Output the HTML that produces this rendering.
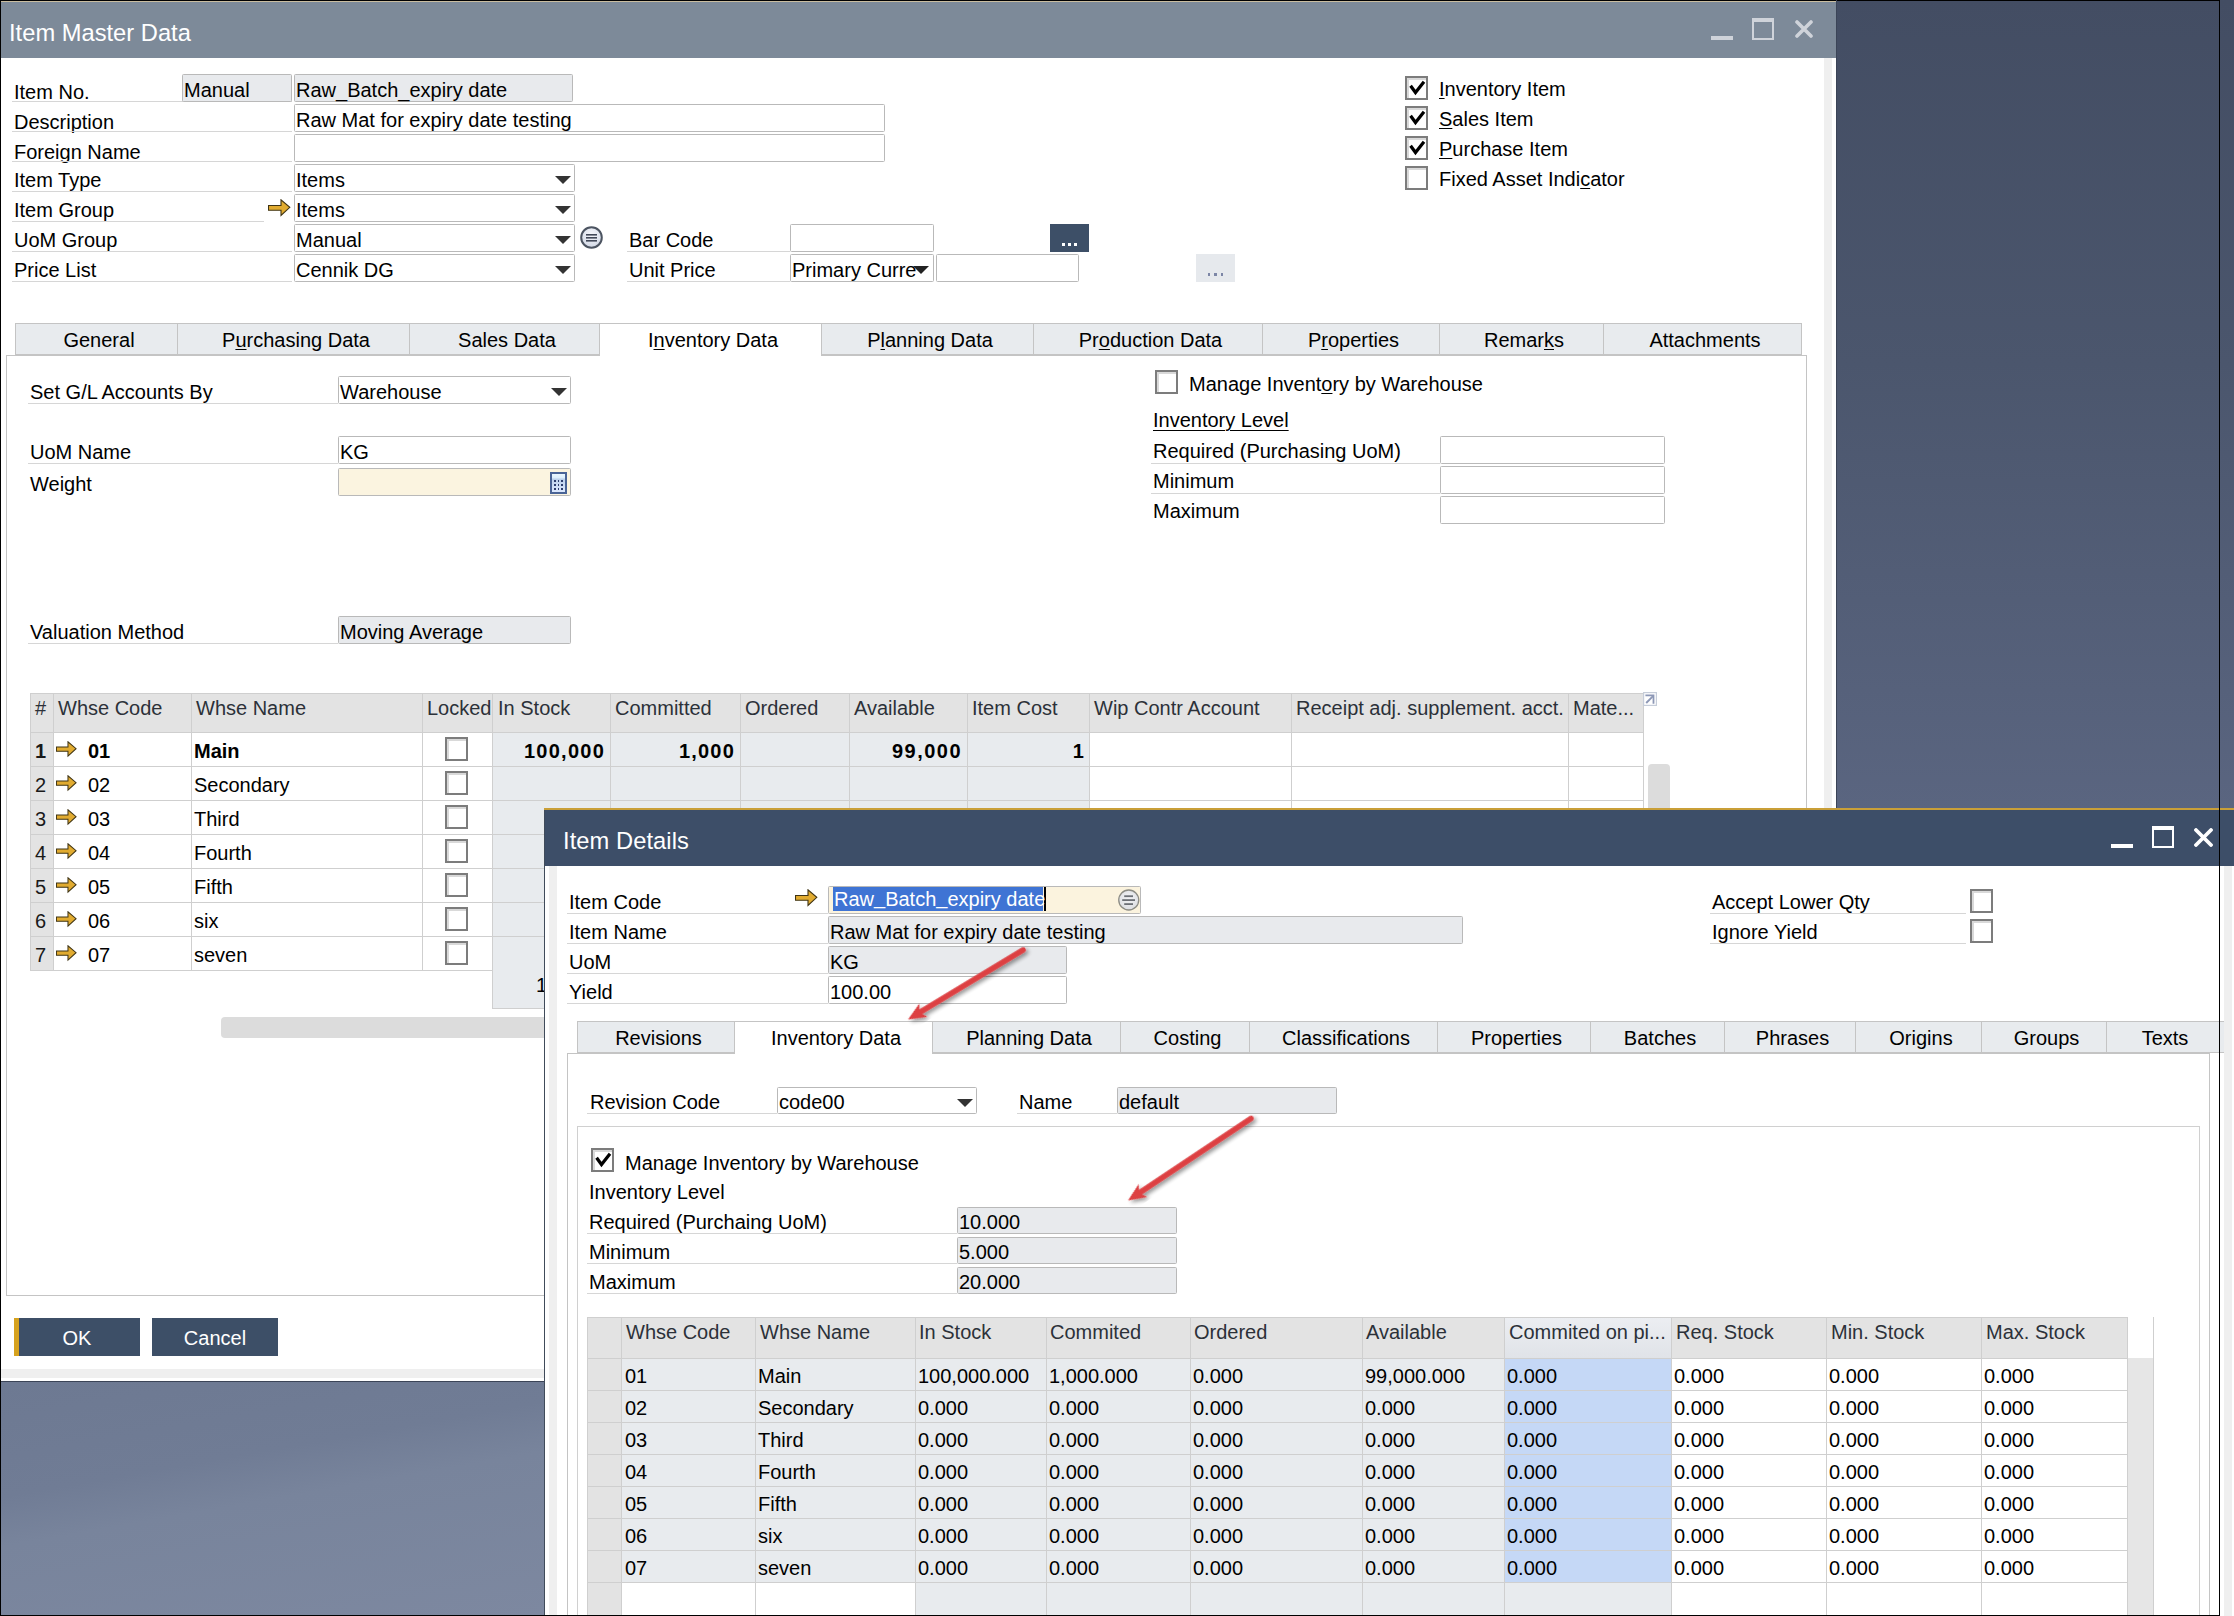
<!DOCTYPE html><html><head><meta charset="utf-8"><style>
html,body{margin:0;padding:0;width:2234px;height:1616px;overflow:hidden;background:#4b566d}
body{position:relative;font-family:"Liberation Sans",sans-serif}
body div,body svg{position:absolute}
.t{white-space:pre}
u{text-decoration:underline;text-underline-offset:2px;text-decoration-thickness:1px}
</style></head><body>
<div style="left:1837px;top:0px;width:397px;height:808px;background:linear-gradient(180deg,#434d63 0%,#4b566d 45%,#5a6580 100%)"></div>
<div style="left:0px;top:1382px;width:545px;height:234px;background:linear-gradient(170deg,#6d7992 0%,#707c95 35%,#78849c 50%,#7d88a0 100%)"></div>
<div style="left:0px;top:0px;width:1837px;height:1382px;background:#fff"></div>
<div style="left:0px;top:0px;width:2220px;height:1px;background:#000"></div>
<div style="left:0px;top:0px;width:1px;height:1381px;background:#000"></div>
<div style="left:1px;top:1px;width:1836px;height:1px;background:#c9bda0"></div>
<div style="left:1px;top:2px;width:1836px;height:56px;background:#7d8a99"></div>
<div class="t" style="left:9.00px;top:18.99px;font-size:23.7px;line-height:28px;color:#fff;letter-spacing:0.015px;">Item Master Data</div>
<div style="left:1711px;top:36px;width:22px;height:4px;background:#cfd3da"></div>
<div style="left:1752px;top:18px;width:22px;height:22px;border:2px solid #cfd3da;border-top-width:4px;box-sizing:border-box"></div>
<svg style="left:1795px;top:20px" width="18" height="18"><path d="M2,2 L16,16 M16,2 L2,16" stroke="#cfd3da" stroke-width="3.6" stroke-linecap="round"/></svg>
<div style="left:1824px;top:58px;width:8px;height:1320px;background:#efefef"></div>
<div style="left:1836px;top:0px;width:1px;height:1382px;background:#3b4457"></div>
<div style="left:1px;top:1369px;width:1835px;height:9px;background:#efefef"></div>
<div style="left:0px;top:1381px;width:1837px;height:1px;background:#3b4457"></div>
<div class="t" style="left:14.00px;top:80.07px;font-size:20px;line-height:24px;color:#000;">Item No.</div>
<div style="left:12px;top:101px;width:280px;height:1px;background:#d6d6d6"></div>
<div class="t" style="left:14.00px;top:110.07px;font-size:20px;line-height:24px;color:#000;">Description</div>
<div style="left:12px;top:131px;width:280px;height:1px;background:#d6d6d6"></div>
<div class="t" style="left:14.00px;top:140.07px;font-size:20px;line-height:24px;color:#000;">Foreign Name</div>
<div style="left:12px;top:161px;width:280px;height:1px;background:#d6d6d6"></div>
<div class="t" style="left:14.00px;top:168.07px;font-size:20px;line-height:24px;color:#000;">Item Type</div>
<div style="left:12px;top:191px;width:280px;height:1px;background:#d6d6d6"></div>
<div class="t" style="left:14.00px;top:198.07px;font-size:20px;line-height:24px;color:#000;">Item Group</div>
<div style="left:12px;top:221px;width:252px;height:1px;background:#d6d6d6"></div>
<div class="t" style="left:14.00px;top:228.07px;font-size:20px;line-height:24px;color:#000;">UoM Group</div>
<div style="left:12px;top:251px;width:280px;height:1px;background:#d6d6d6"></div>
<div class="t" style="left:14.00px;top:258.07px;font-size:20px;line-height:24px;color:#000;">Price List</div>
<div style="left:12px;top:281px;width:280px;height:1px;background:#d6d6d6"></div>
<div style="left:182px;top:74px;width:110px;height:28px;background:#e8eaed;border:1px solid #b9b9b9;border-radius:1.5px;box-sizing:border-box"></div>
<div class="t" style="left:184.00px;top:78.07px;font-size:20px;line-height:24px;color:#000;">Manual</div>
<div style="left:294px;top:74px;width:279px;height:28px;background:#e8eaed;border:1px solid #b9b9b9;border-radius:1.5px;box-sizing:border-box"></div>
<div class="t" style="left:296.00px;top:78.07px;font-size:20px;line-height:24px;color:#000;">Raw_Batch_expiry date</div>
<div style="left:294px;top:104px;width:591px;height:28px;background:#fff;border:1px solid #b9b9b9;border-radius:1.5px;box-sizing:border-box"></div>
<div class="t" style="left:296.00px;top:108.07px;font-size:20px;line-height:24px;color:#000;">Raw Mat for expiry date testing</div>
<div style="left:294px;top:134px;width:591px;height:28px;background:#fff;border:1px solid #b9b9b9;border-radius:1.5px;box-sizing:border-box"></div>
<div style="left:294px;top:164px;width:281px;height:28px;background:#fff;border:1px solid #b9b9b9;border-radius:1.5px;box-sizing:border-box"></div>
<svg style="left:555px;top:176px" width="16" height="8"><polygon points="0,0 16,0 8.0,8" fill="#333"/></svg>
<div class="t" style="left:296.00px;top:168.07px;font-size:20px;line-height:24px;color:#000;">Items</div>
<div style="left:294px;top:194px;width:281px;height:28px;background:#fff;border:1px solid #b9b9b9;border-radius:1.5px;box-sizing:border-box"></div>
<svg style="left:555px;top:206px" width="16" height="8"><polygon points="0,0 16,0 8.0,8" fill="#333"/></svg>
<div class="t" style="left:296.00px;top:198.07px;font-size:20px;line-height:24px;color:#000;">Items</div>
<svg style="left:268px;top:199px" width="23.0" height="18.0" viewBox="0 0 23 18"><path d="M0.5,6.5 H13 V0.8 L21.8,8.3 L13,16.5 V11.2 H0.5 Z" fill="#e1ab30" stroke="#3f3415" stroke-width="1.1" stroke-linejoin="miter"/></svg>
<div style="left:294px;top:224px;width:281px;height:28px;background:#fff;border:1px solid #b9b9b9;border-radius:1.5px;box-sizing:border-box"></div>
<svg style="left:555px;top:236px" width="16" height="8"><polygon points="0,0 16,0 8.0,8" fill="#333"/></svg>
<div class="t" style="left:296.00px;top:228.07px;font-size:20px;line-height:24px;color:#000;">Manual</div>
<div style="left:294px;top:254px;width:281px;height:28px;background:#fff;border:1px solid #b9b9b9;border-radius:1.5px;box-sizing:border-box"></div>
<svg style="left:555px;top:266px" width="16" height="8"><polygon points="0,0 16,0 8.0,8" fill="#333"/></svg>
<div class="t" style="left:296.00px;top:258.07px;font-size:20px;line-height:24px;color:#000;">Cennik DG</div>
<svg style="left:580px;top:226px" width="23" height="23"><defs><radialGradient id="rg580226" cx="50%" cy="35%" r="60%"><stop offset="0" stop-color="#f6f7fc"/><stop offset="1" stop-color="#d4dae6"/></radialGradient></defs><circle cx="11.5" cy="11.5" r="10.3" fill="url(#rg580226)" stroke="#4c5461" stroke-width="2"/><rect x="6" y="8" width="11" height="1.6" fill="#414858"/><rect x="6" y="11" width="11" height="1.6" fill="#414858"/><rect x="6" y="14" width="11" height="1.6" fill="#414858"/></svg>
<div class="t" style="left:629.00px;top:228.07px;font-size:20px;line-height:24px;color:#000;">Bar Code</div>
<div style="left:627px;top:251px;width:163px;height:1px;background:#d6d6d6"></div>
<div class="t" style="left:629.00px;top:258.07px;font-size:20px;line-height:24px;color:#000;">Unit Price</div>
<div style="left:627px;top:281px;width:163px;height:1px;background:#d6d6d6"></div>
<div style="left:790px;top:224px;width:144px;height:28px;background:#fff;border:1px solid #b9b9b9;border-radius:1.5px;box-sizing:border-box"></div>
<div style="left:1050px;top:224px;width:39px;height:28px;background:#3d4f67"></div>
<div style="left:1062px;top:243px;width:2.5px;height:3.3px;background:#fff"></div>
<div style="left:1068px;top:243px;width:2.5px;height:3.3px;background:#fff"></div>
<div style="left:1074px;top:243px;width:2.5px;height:3.3px;background:#fff"></div>
<div style="left:790px;top:254px;width:144px;height:28px;background:#fff;border:1px solid #b9b9b9;border-radius:1.5px;box-sizing:border-box"></div>
<div class="t" style="left:792.00px;top:258.07px;font-size:20px;line-height:24px;color:#000;">Primary Curre</div>
<svg style="left:913px;top:266px" width="16" height="8"><polygon points="0,0 16,0 8.0,8" fill="#222"/></svg>
<div style="left:936px;top:254px;width:143px;height:28px;background:#fff;border:1px solid #b9b9b9;border-radius:1.5px;box-sizing:border-box"></div>
<div style="left:1196px;top:254px;width:39px;height:28px;background:#e6e9ed"></div>
<div style="left:1208px;top:273px;width:2.3px;height:3px;background:#7c86a6"></div>
<div style="left:1214.3px;top:273px;width:2.3px;height:3px;background:#7c86a6"></div>
<div style="left:1220.5px;top:273px;width:2.3px;height:3px;background:#7c86a6"></div>
<div style="left:1405px;top:76px;width:23px;height:24px;border:2px solid #7c7c7c;box-sizing:border-box;background:#fff;box-shadow:inset 2px 2px 0 #d9d9d9"></div>
<svg style="left:1405px;top:76px" width="23" height="23"><polyline points="6.5,11 10.5,16.5 18,7" fill="none" stroke="#000" stroke-width="3.2" stroke-linejoin="miter" stroke-linecap="square"/></svg>
<div class="t" style="left:1439.00px;top:77.07px;font-size:20px;line-height:24px;color:#000;"><u>I</u>nventory Item</div>
<div style="left:1405px;top:106px;width:23px;height:24px;border:2px solid #7c7c7c;box-sizing:border-box;background:#fff;box-shadow:inset 2px 2px 0 #d9d9d9"></div>
<svg style="left:1405px;top:106px" width="23" height="23"><polyline points="6.5,11 10.5,16.5 18,7" fill="none" stroke="#000" stroke-width="3.2" stroke-linejoin="miter" stroke-linecap="square"/></svg>
<div class="t" style="left:1439.00px;top:107.07px;font-size:20px;line-height:24px;color:#000;"><u>S</u>ales Item</div>
<div style="left:1405px;top:136px;width:23px;height:24px;border:2px solid #7c7c7c;box-sizing:border-box;background:#fff;box-shadow:inset 2px 2px 0 #d9d9d9"></div>
<svg style="left:1405px;top:136px" width="23" height="23"><polyline points="6.5,11 10.5,16.5 18,7" fill="none" stroke="#000" stroke-width="3.2" stroke-linejoin="miter" stroke-linecap="square"/></svg>
<div class="t" style="left:1439.00px;top:137.07px;font-size:20px;line-height:24px;color:#000;"><u>P</u>urchase Item</div>
<div style="left:1405px;top:166px;width:23px;height:24px;border:2px solid #7c7c7c;box-sizing:border-box;background:#fff;box-shadow:inset 2px 2px 0 #d9d9d9"></div>
<div class="t" style="left:1439.00px;top:167.07px;font-size:20px;line-height:24px;color:#000;">Fixed Asset Indi<u>c</u>ator</div>
<div style="left:6px;top:355px;width:1801px;height:941px;border:1px solid #c4c4c4;box-sizing:border-box;background:#fff"></div>
<div style="left:15px;top:323px;width:163px;height:32px;background:#e8ebee;border:1px solid #c4c4c4;box-sizing:border-box"></div>
<div class="t" style="left:-101.00px;top:328.07px;font-size:20px;line-height:24px;color:#000;width:400px;text-align:center;">General</div>
<div style="left:177px;top:323px;width:233px;height:32px;background:#e8ebee;border:1px solid #c4c4c4;box-sizing:border-box"></div>
<div class="t" style="left:96.00px;top:328.07px;font-size:20px;line-height:24px;color:#000;width:400px;text-align:center;">P<u>u</u>rchasing Data</div>
<div style="left:409px;top:323px;width:191px;height:32px;background:#e8ebee;border:1px solid #c4c4c4;box-sizing:border-box"></div>
<div class="t" style="left:307.00px;top:328.07px;font-size:20px;line-height:24px;color:#000;width:400px;text-align:center;">Sales Data</div>
<div style="left:599px;top:323px;width:223px;height:33px;background:#fff;border:1px solid #c4c4c4;border-bottom:none;box-sizing:border-box"></div>
<div class="t" style="left:513.00px;top:328.07px;font-size:20px;line-height:24px;color:#000;width:400px;text-align:center;">I<u>n</u>ventory Data</div>
<div style="left:821px;top:323px;width:213px;height:32px;background:#e8ebee;border:1px solid #c4c4c4;box-sizing:border-box"></div>
<div class="t" style="left:730.00px;top:328.07px;font-size:20px;line-height:24px;color:#000;width:400px;text-align:center;">P<u>l</u>anning Data</div>
<div style="left:1033px;top:323px;width:230px;height:32px;background:#e8ebee;border:1px solid #c4c4c4;box-sizing:border-box"></div>
<div class="t" style="left:950.50px;top:328.07px;font-size:20px;line-height:24px;color:#000;width:400px;text-align:center;">Pr<u>o</u>duction Data</div>
<div style="left:1262px;top:323px;width:178px;height:32px;background:#e8ebee;border:1px solid #c4c4c4;box-sizing:border-box"></div>
<div class="t" style="left:1153.50px;top:328.07px;font-size:20px;line-height:24px;color:#000;width:400px;text-align:center;">P<u>r</u>operties</div>
<div style="left:1439px;top:323px;width:165px;height:32px;background:#e8ebee;border:1px solid #c4c4c4;box-sizing:border-box"></div>
<div class="t" style="left:1324.00px;top:328.07px;font-size:20px;line-height:24px;color:#000;width:400px;text-align:center;">Remar<u>k</u>s</div>
<div style="left:1603px;top:323px;width:199px;height:32px;background:#e8ebee;border:1px solid #c4c4c4;box-sizing:border-box"></div>
<div class="t" style="left:1505.00px;top:328.07px;font-size:20px;line-height:24px;color:#000;width:400px;text-align:center;">Attachments</div>
<div class="t" style="left:30.00px;top:380.07px;font-size:20px;line-height:24px;color:#000;">Set G/L Accounts By</div>
<div style="left:28px;top:403px;width:310px;height:1px;background:#d6d6d6"></div>
<div style="left:338px;top:376px;width:233px;height:28px;background:#fff;border:1px solid #b9b9b9;border-radius:1.5px;box-sizing:border-box"></div>
<svg style="left:551px;top:388px" width="16" height="8"><polygon points="0,0 16,0 8.0,8" fill="#333"/></svg>
<div class="t" style="left:340.00px;top:380.07px;font-size:20px;line-height:24px;color:#000;">Warehouse</div>
<div class="t" style="left:30.00px;top:440.07px;font-size:20px;line-height:24px;color:#000;">UoM Name</div>
<div style="left:28px;top:463px;width:310px;height:1px;background:#d6d6d6"></div>
<div style="left:338px;top:436px;width:233px;height:28px;background:#fff;border:1px solid #b9b9b9;border-radius:1.5px;box-sizing:border-box"></div>
<div class="t" style="left:340.00px;top:440.07px;font-size:20px;line-height:24px;color:#000;">KG</div>
<div class="t" style="left:30.00px;top:472.07px;font-size:20px;line-height:24px;color:#000;">Weight</div>
<div style="left:338px;top:468px;width:233px;height:28px;background:#fbf4e0;border:1px solid #b9b9b9;border-radius:1.5px;box-sizing:border-box"></div>
<svg style="left:550px;top:472px" width="17" height="22"><defs><linearGradient id="cg" x1="0" y1="0" x2="0" y2="1"><stop offset="0" stop-color="#eef9ff"/><stop offset="0.25" stop-color="#dceefc"/><stop offset="0.3" stop-color="#bcd0ea"/><stop offset="1" stop-color="#dfeaff"/></defs><rect x="1" y="1" width="15" height="20" fill="url(#cg)" stroke="#4a6496" stroke-width="2"/><rect x="4" y="8" width="2" height="2" fill="#2e3f6e"/><rect x="4" y="12" width="2" height="2" fill="#2e3f6e"/><rect x="4" y="16" width="2" height="2" fill="#2e3f6e"/><rect x="8" y="8" width="1" height="2" fill="#2e3f6e"/><rect x="8" y="12" width="1" height="2" fill="#2e3f6e"/><rect x="8" y="16" width="1" height="2" fill="#2e3f6e"/><rect x="11" y="8" width="2" height="2" fill="#2e3f6e"/><rect x="11" y="12" width="2" height="2" fill="#2e3f6e"/><rect x="11" y="16" width="2" height="2" fill="#2e3f6e"/></svg>
<div class="t" style="left:30.00px;top:620.07px;font-size:20px;line-height:24px;color:#000;">Valuation Method</div>
<div style="left:28px;top:643px;width:310px;height:1px;background:#d6d6d6"></div>
<div style="left:338px;top:616px;width:233px;height:28px;background:#e8eaed;border:1px solid #b9b9b9;border-radius:1.5px;box-sizing:border-box"></div>
<div class="t" style="left:340.00px;top:620.07px;font-size:20px;line-height:24px;color:#000;">Moving Average</div>
<div style="left:1155px;top:370px;width:23px;height:24px;border:2px solid #7c7c7c;box-sizing:border-box;background:#fff;box-shadow:inset 2px 2px 0 #d9d9d9"></div>
<div class="t" style="left:1189.00px;top:372.07px;font-size:20px;line-height:24px;color:#000;">Manage Invent<u>o</u>ry by Warehouse</div>
<div class="t" style="left:1153.00px;top:408.07px;font-size:20px;line-height:24px;color:#000;text-decoration:underline;text-underline-offset:3px;text-decoration-thickness:1px;">Inventory Level</div>
<div class="t" style="left:1153.00px;top:439.07px;font-size:20px;line-height:24px;color:#000;">Required (Purchasing UoM)</div>
<div style="left:1151px;top:463px;width:289px;height:1px;background:#d6d6d6"></div>
<div class="t" style="left:1153.00px;top:469.07px;font-size:20px;line-height:24px;color:#000;">Minimum</div>
<div style="left:1151px;top:493px;width:289px;height:1px;background:#d6d6d6"></div>
<div class="t" style="left:1153.00px;top:499.07px;font-size:20px;line-height:24px;color:#000;">Maximum</div>
<div style="left:1440px;top:436px;width:225px;height:28px;background:#fff;border:1px solid #b9b9b9;border-radius:1.5px;box-sizing:border-box"></div>
<div style="left:1440px;top:466px;width:225px;height:28px;background:#fff;border:1px solid #b9b9b9;border-radius:1.5px;box-sizing:border-box"></div>
<div style="left:1440px;top:496px;width:225px;height:28px;background:#fff;border:1px solid #b9b9b9;border-radius:1.5px;box-sizing:border-box"></div>
<div style="left:30px;top:693px;width:1613px;height:40px;background:#e3e3e3"></div>
<div style="left:30px;top:732px;width:23px;height:34px;background:#e3e3e3"></div>
<div style="left:53px;top:732px;width:439px;height:34px;background:#fff"></div>
<div style="left:492px;top:732px;width:597px;height:34px;background:#e8ebee"></div>
<div style="left:1089px;top:732px;width:554px;height:34px;background:#fff"></div>
<div style="left:30px;top:766px;width:23px;height:34px;background:#e3e3e3"></div>
<div style="left:53px;top:766px;width:439px;height:34px;background:#fff"></div>
<div style="left:492px;top:766px;width:597px;height:34px;background:#e8ebee"></div>
<div style="left:1089px;top:766px;width:554px;height:34px;background:#fff"></div>
<div style="left:30px;top:800px;width:23px;height:34px;background:#e3e3e3"></div>
<div style="left:53px;top:800px;width:439px;height:34px;background:#fff"></div>
<div style="left:492px;top:800px;width:597px;height:34px;background:#e8ebee"></div>
<div style="left:1089px;top:800px;width:554px;height:34px;background:#fff"></div>
<div style="left:30px;top:834px;width:23px;height:34px;background:#e3e3e3"></div>
<div style="left:53px;top:834px;width:439px;height:34px;background:#fff"></div>
<div style="left:492px;top:834px;width:597px;height:34px;background:#e8ebee"></div>
<div style="left:1089px;top:834px;width:554px;height:34px;background:#fff"></div>
<div style="left:30px;top:868px;width:23px;height:34px;background:#e3e3e3"></div>
<div style="left:53px;top:868px;width:439px;height:34px;background:#fff"></div>
<div style="left:492px;top:868px;width:597px;height:34px;background:#e8ebee"></div>
<div style="left:1089px;top:868px;width:554px;height:34px;background:#fff"></div>
<div style="left:30px;top:902px;width:23px;height:34px;background:#e3e3e3"></div>
<div style="left:53px;top:902px;width:439px;height:34px;background:#fff"></div>
<div style="left:492px;top:902px;width:597px;height:34px;background:#e8ebee"></div>
<div style="left:1089px;top:902px;width:554px;height:34px;background:#fff"></div>
<div style="left:30px;top:936px;width:23px;height:34px;background:#e3e3e3"></div>
<div style="left:53px;top:936px;width:439px;height:34px;background:#fff"></div>
<div style="left:492px;top:936px;width:597px;height:34px;background:#e8ebee"></div>
<div style="left:1089px;top:936px;width:554px;height:34px;background:#fff"></div>
<div style="left:30px;top:693px;width:1613px;height:1px;background:#cfcfcf"></div>
<div style="left:30px;top:732px;width:1613px;height:1px;background:#cfcfcf"></div>
<div style="left:30px;top:766px;width:1613px;height:1px;background:#cfcfcf"></div>
<div style="left:30px;top:800px;width:1613px;height:1px;background:#cfcfcf"></div>
<div style="left:30px;top:834px;width:1613px;height:1px;background:#cfcfcf"></div>
<div style="left:30px;top:868px;width:1613px;height:1px;background:#cfcfcf"></div>
<div style="left:30px;top:902px;width:1613px;height:1px;background:#cfcfcf"></div>
<div style="left:30px;top:936px;width:1613px;height:1px;background:#cfcfcf"></div>
<div style="left:30px;top:970px;width:1613px;height:1px;background:#cfcfcf"></div>
<div style="left:30px;top:693px;width:1px;height:277px;background:#cfcfcf"></div>
<div style="left:53px;top:693px;width:1px;height:277px;background:#cfcfcf"></div>
<div style="left:191px;top:693px;width:1px;height:277px;background:#cfcfcf"></div>
<div style="left:422px;top:693px;width:1px;height:277px;background:#cfcfcf"></div>
<div style="left:492px;top:693px;width:1px;height:277px;background:#cfcfcf"></div>
<div style="left:610px;top:693px;width:1px;height:277px;background:#cfcfcf"></div>
<div style="left:740px;top:693px;width:1px;height:277px;background:#cfcfcf"></div>
<div style="left:849px;top:693px;width:1px;height:277px;background:#cfcfcf"></div>
<div style="left:967px;top:693px;width:1px;height:277px;background:#cfcfcf"></div>
<div style="left:1089px;top:693px;width:1px;height:277px;background:#cfcfcf"></div>
<div style="left:1291px;top:693px;width:1px;height:277px;background:#cfcfcf"></div>
<div style="left:1568px;top:693px;width:1px;height:277px;background:#cfcfcf"></div>
<div style="left:1643px;top:693px;width:1px;height:277px;background:#cfcfcf"></div>
<div class="t" style="left:35.00px;top:696.07px;font-size:20px;line-height:24px;color:#2c3139;">#</div>
<div class="t" style="left:58.00px;top:696.07px;font-size:20px;line-height:24px;color:#2c3139;">Whse Code</div>
<div class="t" style="left:196.00px;top:696.07px;font-size:20px;line-height:24px;color:#2c3139;">Whse Name</div>
<div class="t" style="left:427.00px;top:696.07px;font-size:20px;line-height:24px;color:#2c3139;">Locked</div>
<div class="t" style="left:498.00px;top:696.07px;font-size:20px;line-height:24px;color:#2c3139;">In Stock</div>
<div class="t" style="left:615.00px;top:696.07px;font-size:20px;line-height:24px;color:#2c3139;">Committed</div>
<div class="t" style="left:745.00px;top:696.07px;font-size:20px;line-height:24px;color:#2c3139;">Ordered</div>
<div class="t" style="left:854.00px;top:696.07px;font-size:20px;line-height:24px;color:#2c3139;">Available</div>
<div class="t" style="left:972.00px;top:696.07px;font-size:20px;line-height:24px;color:#2c3139;">Item Cost</div>
<div class="t" style="left:1094.00px;top:696.07px;font-size:20px;line-height:24px;color:#2c3139;">Wip Contr Account</div>
<div class="t" style="left:1296.00px;top:696.07px;font-size:20px;line-height:24px;color:#2c3139;">Receipt adj. supplement. acct.</div>
<div class="t" style="left:1573.00px;top:696.07px;font-size:20px;line-height:24px;color:#2c3139;">Mate...</div>
<svg style="left:1643px;top:692px" width="14" height="14"><rect x="0.6" y="0.6" width="12.8" height="12.8" fill="#fff" stroke="#c6cdd9" stroke-width="1.2"/><path d="M3.3,3.3 H10.5 V10.8" stroke="#8d98b6" stroke-width="1.8" fill="none" stroke-linecap="square"/><path d="M3.2,11 L10,4.2" stroke="#8d98b6" stroke-width="1.9" fill="none"/></svg>
<div class="t" style="left:35.00px;top:738.57px;font-size:20px;line-height:24px;color:#1a1a1a;font-weight:bold;">1</div>
<svg style="left:56px;top:741px" width="21.2" height="16.6" viewBox="0 0 23 18"><path d="M0.5,6.5 H13 V0.8 L21.8,8.3 L13,16.5 V11.2 H0.5 Z" fill="#e1ab30" stroke="#3f3415" stroke-width="1.1" stroke-linejoin="miter"/></svg>
<div class="t" style="left:88.00px;top:738.57px;font-size:20px;line-height:24px;color:#000;font-weight:bold;">01</div>
<div class="t" style="left:194.00px;top:738.57px;font-size:20px;line-height:24px;color:#000;font-weight:bold;">Main</div>
<div style="left:445px;top:737px;width:23px;height:24px;border:2px solid #7c7c7c;box-sizing:border-box;background:#fff;box-shadow:inset 2px 2px 0 #d9d9d9"></div>
<div class="t" style="left:35.00px;top:772.57px;font-size:20px;line-height:24px;color:#1a1a1a;">2</div>
<svg style="left:56px;top:775px" width="21.2" height="16.6" viewBox="0 0 23 18"><path d="M0.5,6.5 H13 V0.8 L21.8,8.3 L13,16.5 V11.2 H0.5 Z" fill="#e1ab30" stroke="#3f3415" stroke-width="1.1" stroke-linejoin="miter"/></svg>
<div class="t" style="left:88.00px;top:772.57px;font-size:20px;line-height:24px;color:#000;">02</div>
<div class="t" style="left:194.00px;top:772.57px;font-size:20px;line-height:24px;color:#000;">Secondary</div>
<div style="left:445px;top:771px;width:23px;height:24px;border:2px solid #7c7c7c;box-sizing:border-box;background:#fff;box-shadow:inset 2px 2px 0 #d9d9d9"></div>
<div class="t" style="left:35.00px;top:806.57px;font-size:20px;line-height:24px;color:#1a1a1a;">3</div>
<svg style="left:56px;top:809px" width="21.2" height="16.6" viewBox="0 0 23 18"><path d="M0.5,6.5 H13 V0.8 L21.8,8.3 L13,16.5 V11.2 H0.5 Z" fill="#e1ab30" stroke="#3f3415" stroke-width="1.1" stroke-linejoin="miter"/></svg>
<div class="t" style="left:88.00px;top:806.57px;font-size:20px;line-height:24px;color:#000;">03</div>
<div class="t" style="left:194.00px;top:806.57px;font-size:20px;line-height:24px;color:#000;">Third</div>
<div style="left:445px;top:805px;width:23px;height:24px;border:2px solid #7c7c7c;box-sizing:border-box;background:#fff;box-shadow:inset 2px 2px 0 #d9d9d9"></div>
<div class="t" style="left:35.00px;top:840.57px;font-size:20px;line-height:24px;color:#1a1a1a;">4</div>
<svg style="left:56px;top:843px" width="21.2" height="16.6" viewBox="0 0 23 18"><path d="M0.5,6.5 H13 V0.8 L21.8,8.3 L13,16.5 V11.2 H0.5 Z" fill="#e1ab30" stroke="#3f3415" stroke-width="1.1" stroke-linejoin="miter"/></svg>
<div class="t" style="left:88.00px;top:840.57px;font-size:20px;line-height:24px;color:#000;">04</div>
<div class="t" style="left:194.00px;top:840.57px;font-size:20px;line-height:24px;color:#000;">Fourth</div>
<div style="left:445px;top:839px;width:23px;height:24px;border:2px solid #7c7c7c;box-sizing:border-box;background:#fff;box-shadow:inset 2px 2px 0 #d9d9d9"></div>
<div class="t" style="left:35.00px;top:874.57px;font-size:20px;line-height:24px;color:#1a1a1a;">5</div>
<svg style="left:56px;top:877px" width="21.2" height="16.6" viewBox="0 0 23 18"><path d="M0.5,6.5 H13 V0.8 L21.8,8.3 L13,16.5 V11.2 H0.5 Z" fill="#e1ab30" stroke="#3f3415" stroke-width="1.1" stroke-linejoin="miter"/></svg>
<div class="t" style="left:88.00px;top:874.57px;font-size:20px;line-height:24px;color:#000;">05</div>
<div class="t" style="left:194.00px;top:874.57px;font-size:20px;line-height:24px;color:#000;">Fifth</div>
<div style="left:445px;top:873px;width:23px;height:24px;border:2px solid #7c7c7c;box-sizing:border-box;background:#fff;box-shadow:inset 2px 2px 0 #d9d9d9"></div>
<div class="t" style="left:35.00px;top:908.57px;font-size:20px;line-height:24px;color:#1a1a1a;">6</div>
<svg style="left:56px;top:911px" width="21.2" height="16.6" viewBox="0 0 23 18"><path d="M0.5,6.5 H13 V0.8 L21.8,8.3 L13,16.5 V11.2 H0.5 Z" fill="#e1ab30" stroke="#3f3415" stroke-width="1.1" stroke-linejoin="miter"/></svg>
<div class="t" style="left:88.00px;top:908.57px;font-size:20px;line-height:24px;color:#000;">06</div>
<div class="t" style="left:194.00px;top:908.57px;font-size:20px;line-height:24px;color:#000;">six</div>
<div style="left:445px;top:907px;width:23px;height:24px;border:2px solid #7c7c7c;box-sizing:border-box;background:#fff;box-shadow:inset 2px 2px 0 #d9d9d9"></div>
<div class="t" style="left:35.00px;top:942.57px;font-size:20px;line-height:24px;color:#1a1a1a;">7</div>
<svg style="left:56px;top:945px" width="21.2" height="16.6" viewBox="0 0 23 18"><path d="M0.5,6.5 H13 V0.8 L21.8,8.3 L13,16.5 V11.2 H0.5 Z" fill="#e1ab30" stroke="#3f3415" stroke-width="1.1" stroke-linejoin="miter"/></svg>
<div class="t" style="left:88.00px;top:942.57px;font-size:20px;line-height:24px;color:#000;">07</div>
<div class="t" style="left:194.00px;top:942.57px;font-size:20px;line-height:24px;color:#000;">seven</div>
<div style="left:445px;top:941px;width:23px;height:24px;border:2px solid #7c7c7c;box-sizing:border-box;background:#fff;box-shadow:inset 2px 2px 0 #d9d9d9"></div>
<div class="t" style="left:520.00px;top:738.57px;font-size:20px;line-height:24px;color:#000;font-weight:bold;letter-spacing:1.243px;width:85.00px;text-align:right;">100,000</div>
<div class="t" style="left:675.00px;top:738.57px;font-size:20px;line-height:24px;color:#000;font-weight:bold;letter-spacing:1.190px;width:60.00px;text-align:right;">1,000</div>
<div class="t" style="left:888.00px;top:738.57px;font-size:20px;line-height:24px;color:#000;font-weight:bold;letter-spacing:1.471px;width:74.00px;text-align:right;">99,000</div>
<div class="t" style="left:1068.88px;top:738.57px;font-size:20px;line-height:24px;color:#000;font-weight:bold;width:15.12px;text-align:right;">1</div>
<div style="left:492px;top:970px;width:60px;height:39px;background:#e8ebee;border-left:1px solid #cfcfcf;border-bottom:1px solid #cfcfcf;box-sizing:border-box"></div>
<div class="t" style="left:536.00px;top:972.57px;font-size:20px;line-height:24px;color:#000;">1</div>
<div style="left:221px;top:1017px;width:400px;height:21px;background:#dcdcdc;border-radius:4px"></div>
<div style="left:1648px;top:764px;width:22px;height:60px;background:#dcdcdc;border-radius:4px"></div>
<div style="left:14px;top:1318px;width:126px;height:38px;background:#3d4f67;border-left:5px solid #d6a21e;box-sizing:border-box"></div>
<div class="t" style="left:-123.00px;top:1325.57px;font-size:20px;line-height:24px;color:#fff;width:400px;text-align:center;">OK</div>
<div style="left:152px;top:1318px;width:126px;height:38px;background:#3d4f67"></div>
<div class="t" style="left:15.00px;top:1325.57px;font-size:20px;line-height:24px;color:#fff;width:400px;text-align:center;">Cancel</div>
<div style="left:544px;top:808px;width:1690px;height:808px;background:#fff"></div>
<div style="left:544px;top:808px;width:1690px;height:2px;background:#c99f38"></div>
<div style="left:544px;top:810px;width:1690px;height:56px;background:#3d4e68"></div>
<div style="left:544px;top:810px;width:1px;height:806px;background:#404b5a"></div>
<div style="left:549px;top:866px;width:8px;height:750px;background:#efefef"></div>
<div class="t" style="left:563.00px;top:826.79px;font-size:23.7px;line-height:28px;color:#fff;letter-spacing:0.073px;">Item Details</div>
<div style="left:2111px;top:844px;width:22px;height:4px;background:#fff"></div>
<div style="left:2152px;top:826px;width:22px;height:22px;border:2px solid #fff;border-top-width:4px;box-sizing:border-box"></div>
<svg style="left:2194px;top:828px" width="19" height="19"><path d="M2,2 L17,17 M17,2 L2,17" stroke="#fff" stroke-width="3.8" stroke-linecap="round"/></svg>
<div class="t" style="left:569.00px;top:890.07px;font-size:20px;line-height:24px;color:#000;">Item Code</div>
<div style="left:567px;top:913px;width:261px;height:1px;background:#d6d6d6"></div>
<div class="t" style="left:569.00px;top:920.07px;font-size:20px;line-height:24px;color:#000;">Item Name</div>
<div style="left:567px;top:943px;width:261px;height:1px;background:#d6d6d6"></div>
<div class="t" style="left:569.00px;top:950.07px;font-size:20px;line-height:24px;color:#000;">UoM</div>
<div style="left:567px;top:973px;width:261px;height:1px;background:#d6d6d6"></div>
<div class="t" style="left:569.00px;top:980.07px;font-size:20px;line-height:24px;color:#000;">Yield</div>
<div style="left:567px;top:1003px;width:261px;height:1px;background:#d6d6d6"></div>
<div style="left:828px;top:886px;width:313px;height:28px;background:#fbf3de;border:1px solid #b9b9b9;border-radius:1.5px;box-sizing:border-box"></div>
<div style="left:833px;top:887px;width:210px;height:24px;background:#3f74d4"></div>
<div style="left:1044px;top:887px;width:2px;height:24px;background:#000"></div>
<div class="t" style="left:834px;top:887.07px;font-size:20px;line-height:24px;color:#fff">Raw<span style="position:relative;top:-2.5px">_</span>Batch<span style="position:relative;top:-2.5px">_</span>expiry date</div>
<svg style="left:1118px;top:889px" width="22" height="22"><defs><radialGradient id="rh1118" cx="50%" cy="40%" r="60%"><stop offset="0" stop-color="#f2f3f5"/><stop offset="1" stop-color="#dcdee2"/></radialGradient></defs><circle cx="10.75" cy="11" r="10" fill="url(#rh1118)" stroke="#8c8c84" stroke-width="1.3"/><rect x="6.2" y="6.3" width="8.8" height="1.8" fill="#6c7076"/><rect x="4.2" y="10.2" width="12.8" height="1.8" fill="#6c7076"/><rect x="6.2" y="14.2" width="8.8" height="1.8" fill="#6c7076"/></svg>
<svg style="left:795px;top:889px" width="23.0" height="18.0" viewBox="0 0 23 18"><path d="M0.5,6.5 H13 V0.8 L21.8,8.3 L13,16.5 V11.2 H0.5 Z" fill="#e1ab30" stroke="#3f3415" stroke-width="1.1" stroke-linejoin="miter"/></svg>
<div style="left:828px;top:916px;width:635px;height:28px;background:#e8eaed;border:1px solid #b9b9b9;border-radius:1.5px;box-sizing:border-box"></div>
<div class="t" style="left:830.00px;top:920.07px;font-size:20px;line-height:24px;color:#000;">Raw Mat for expiry date testing</div>
<div style="left:828px;top:946px;width:239px;height:28px;background:#e8eaed;border:1px solid #b9b9b9;border-radius:1.5px;box-sizing:border-box"></div>
<div class="t" style="left:830.00px;top:950.07px;font-size:20px;line-height:24px;color:#000;">KG</div>
<div style="left:828px;top:976px;width:239px;height:28px;background:#fff;border:1px solid #b9b9b9;border-radius:1.5px;box-sizing:border-box"></div>
<div class="t" style="left:830.00px;top:980.07px;font-size:20px;line-height:24px;color:#000;">100.00</div>
<div class="t" style="left:1712.00px;top:890.07px;font-size:20px;line-height:24px;color:#000;">Accept Lower Qty</div>
<div style="left:1710px;top:913px;width:256px;height:1px;background:#d6d6d6"></div>
<div class="t" style="left:1712.00px;top:920.07px;font-size:20px;line-height:24px;color:#000;">Ignore Yield</div>
<div style="left:1710px;top:943px;width:256px;height:1px;background:#d6d6d6"></div>
<div style="left:1970px;top:889px;width:23px;height:24px;border:2px solid #7c7c7c;box-sizing:border-box;background:#fff;box-shadow:inset 2px 2px 0 #d9d9d9"></div>
<div style="left:1970px;top:919px;width:23px;height:24px;border:2px solid #7c7c7c;box-sizing:border-box;background:#fff;box-shadow:inset 2px 2px 0 #d9d9d9"></div>
<div style="left:567px;top:1053px;width:1643px;height:600px;border:1px solid #c4c4c4;box-sizing:border-box;background:#fff"></div>
<div style="left:577px;top:1021px;width:158px;height:32px;background:#e8ebee;border:1px solid #c4c4c4;box-sizing:border-box"></div>
<div class="t" style="left:458.50px;top:1026.07px;font-size:20px;line-height:24px;color:#000;width:400px;text-align:center;">Revisions</div>
<div style="left:734px;top:1021px;width:199px;height:33px;background:#fff;border:1px solid #c4c4c4;border-bottom:none;box-sizing:border-box"></div>
<div class="t" style="left:636.00px;top:1026.07px;font-size:20px;line-height:24px;color:#000;width:400px;text-align:center;">Inventory Data</div>
<div style="left:932px;top:1021px;width:189px;height:32px;background:#e8ebee;border:1px solid #c4c4c4;box-sizing:border-box"></div>
<div class="t" style="left:829.00px;top:1026.07px;font-size:20px;line-height:24px;color:#000;width:400px;text-align:center;">Planning Data</div>
<div style="left:1120px;top:1021px;width:130px;height:32px;background:#e8ebee;border:1px solid #c4c4c4;box-sizing:border-box"></div>
<div class="t" style="left:987.50px;top:1026.07px;font-size:20px;line-height:24px;color:#000;width:400px;text-align:center;">Costing</div>
<div style="left:1249px;top:1021px;width:189px;height:32px;background:#e8ebee;border:1px solid #c4c4c4;box-sizing:border-box"></div>
<div class="t" style="left:1146.00px;top:1026.07px;font-size:20px;line-height:24px;color:#000;width:400px;text-align:center;">Classifications</div>
<div style="left:1437px;top:1021px;width:154px;height:32px;background:#e8ebee;border:1px solid #c4c4c4;box-sizing:border-box"></div>
<div class="t" style="left:1316.50px;top:1026.07px;font-size:20px;line-height:24px;color:#000;width:400px;text-align:center;">Properties</div>
<div style="left:1590px;top:1021px;width:135px;height:32px;background:#e8ebee;border:1px solid #c4c4c4;box-sizing:border-box"></div>
<div class="t" style="left:1460.00px;top:1026.07px;font-size:20px;line-height:24px;color:#000;width:400px;text-align:center;">Batches</div>
<div style="left:1724px;top:1021px;width:132px;height:32px;background:#e8ebee;border:1px solid #c4c4c4;box-sizing:border-box"></div>
<div class="t" style="left:1592.50px;top:1026.07px;font-size:20px;line-height:24px;color:#000;width:400px;text-align:center;">Phrases</div>
<div style="left:1855px;top:1021px;width:127px;height:32px;background:#e8ebee;border:1px solid #c4c4c4;box-sizing:border-box"></div>
<div class="t" style="left:1721.00px;top:1026.07px;font-size:20px;line-height:24px;color:#000;width:400px;text-align:center;">Origins</div>
<div style="left:1981px;top:1021px;width:126px;height:32px;background:#e8ebee;border:1px solid #c4c4c4;box-sizing:border-box"></div>
<div class="t" style="left:1846.50px;top:1026.07px;font-size:20px;line-height:24px;color:#000;width:400px;text-align:center;">Groups</div>
<div style="left:2106px;top:1021px;width:113px;height:32px;background:#e8ebee;border:1px solid #c4c4c4;box-sizing:border-box"></div>
<div class="t" style="left:1965.00px;top:1026.07px;font-size:20px;line-height:24px;color:#000;width:400px;text-align:center;">Texts</div>
<div style="left:2218px;top:1021px;width:6px;height:32px;background:#e8ebee;border-top:1px solid #c4c4c4;border-bottom:1px solid #c4c4c4;box-sizing:border-box"></div>
<div class="t" style="left:590.00px;top:1090.07px;font-size:20px;line-height:24px;color:#000;">Revision Code</div>
<div style="left:587px;top:1113px;width:190px;height:1px;background:#d6d6d6"></div>
<div style="left:777px;top:1087px;width:200px;height:27px;background:#fff;border:1px solid #b9b9b9;border-radius:1.5px;box-sizing:border-box"></div>
<svg style="left:957px;top:1099px" width="16" height="8"><polygon points="0,0 16,0 8.0,8" fill="#333"/></svg>
<div class="t" style="left:779.00px;top:1090.07px;font-size:20px;line-height:24px;color:#000;">code00</div>
<div class="t" style="left:1019.00px;top:1090.07px;font-size:20px;line-height:24px;color:#000;">Name</div>
<div style="left:1017px;top:1113px;width:100px;height:1px;background:#d6d6d6"></div>
<div style="left:1117px;top:1087px;width:220px;height:27px;background:#e8eaed;border:1px solid #b9b9b9;border-radius:1.5px;box-sizing:border-box"></div>
<div class="t" style="left:1119.00px;top:1090.07px;font-size:20px;line-height:24px;color:#000;">default</div>
<div style="left:577px;top:1126px;width:1623px;height:500px;border:1px solid #d0d0d0;box-sizing:border-box"></div>
<div style="left:591px;top:1148px;width:23px;height:24px;border:2px solid #7c7c7c;box-sizing:border-box;background:#fff;box-shadow:inset 2px 2px 0 #d9d9d9"></div>
<svg style="left:591px;top:1148px" width="23" height="23"><polyline points="6.5,11 10.5,16.5 18,7" fill="none" stroke="#000" stroke-width="3.2" stroke-linejoin="miter" stroke-linecap="square"/></svg>
<div class="t" style="left:625.00px;top:1150.57px;font-size:20px;line-height:24px;color:#000;">Manage Inventory by Warehouse</div>
<div class="t" style="left:589.00px;top:1180.07px;font-size:20px;line-height:24px;color:#000;">Inventory Level</div>
<div class="t" style="left:589.00px;top:1210.07px;font-size:20px;line-height:24px;color:#000;">Required (Purchaing UoM)</div>
<div style="left:587px;top:1233px;width:370px;height:1px;background:#d6d6d6"></div>
<div class="t" style="left:589.00px;top:1240.07px;font-size:20px;line-height:24px;color:#000;">Minimum</div>
<div style="left:587px;top:1263px;width:370px;height:1px;background:#d6d6d6"></div>
<div class="t" style="left:589.00px;top:1270.07px;font-size:20px;line-height:24px;color:#000;">Maximum</div>
<div style="left:587px;top:1293px;width:370px;height:1px;background:#d6d6d6"></div>
<div style="left:957px;top:1207px;width:220px;height:27px;background:#e8eaed;border:1px solid #b9b9b9;border-radius:1.5px;box-sizing:border-box"></div>
<div class="t" style="left:959.00px;top:1210.07px;font-size:20px;line-height:24px;color:#000;">10.000</div>
<div style="left:957px;top:1237px;width:220px;height:27px;background:#e8eaed;border:1px solid #b9b9b9;border-radius:1.5px;box-sizing:border-box"></div>
<div class="t" style="left:959.00px;top:1240.07px;font-size:20px;line-height:24px;color:#000;">5.000</div>
<div style="left:957px;top:1267px;width:220px;height:27px;background:#e8eaed;border:1px solid #b9b9b9;border-radius:1.5px;box-sizing:border-box"></div>
<div class="t" style="left:959.00px;top:1270.07px;font-size:20px;line-height:24px;color:#000;">20.000</div>
<div style="left:587px;top:1317px;width:1540px;height:41px;background:#e3e3e3"></div>
<div style="left:1504px;top:1317px;width:167px;height:41px;background:linear-gradient(180deg,#eceef2,#e0e3e8)"></div>
<div style="left:587px;top:1358px;width:34px;height:32px;background:#e3e3e3"></div>
<div style="left:621px;top:1358px;width:1050px;height:32px;background:#e8ebee"></div>
<div style="left:1504px;top:1358px;width:167px;height:32px;background:#c5d8f6"></div>
<div style="left:1671px;top:1358px;width:456px;height:32px;background:#fff"></div>
<div style="left:587px;top:1390px;width:34px;height:32px;background:#e3e3e3"></div>
<div style="left:621px;top:1390px;width:1050px;height:32px;background:#e8ebee"></div>
<div style="left:1504px;top:1390px;width:167px;height:32px;background:#c5d8f6"></div>
<div style="left:1671px;top:1390px;width:456px;height:32px;background:#fff"></div>
<div style="left:587px;top:1422px;width:34px;height:32px;background:#e3e3e3"></div>
<div style="left:621px;top:1422px;width:1050px;height:32px;background:#e8ebee"></div>
<div style="left:1504px;top:1422px;width:167px;height:32px;background:#c5d8f6"></div>
<div style="left:1671px;top:1422px;width:456px;height:32px;background:#fff"></div>
<div style="left:587px;top:1454px;width:34px;height:32px;background:#e3e3e3"></div>
<div style="left:621px;top:1454px;width:1050px;height:32px;background:#e8ebee"></div>
<div style="left:1504px;top:1454px;width:167px;height:32px;background:#c5d8f6"></div>
<div style="left:1671px;top:1454px;width:456px;height:32px;background:#fff"></div>
<div style="left:587px;top:1486px;width:34px;height:32px;background:#e3e3e3"></div>
<div style="left:621px;top:1486px;width:1050px;height:32px;background:#e8ebee"></div>
<div style="left:1504px;top:1486px;width:167px;height:32px;background:#c5d8f6"></div>
<div style="left:1671px;top:1486px;width:456px;height:32px;background:#fff"></div>
<div style="left:587px;top:1518px;width:34px;height:32px;background:#e3e3e3"></div>
<div style="left:621px;top:1518px;width:1050px;height:32px;background:#e8ebee"></div>
<div style="left:1504px;top:1518px;width:167px;height:32px;background:#c5d8f6"></div>
<div style="left:1671px;top:1518px;width:456px;height:32px;background:#fff"></div>
<div style="left:587px;top:1550px;width:34px;height:32px;background:#e3e3e3"></div>
<div style="left:621px;top:1550px;width:1050px;height:32px;background:#e8ebee"></div>
<div style="left:1504px;top:1550px;width:167px;height:32px;background:#c5d8f6"></div>
<div style="left:1671px;top:1550px;width:456px;height:32px;background:#fff"></div>
<div style="left:587px;top:1582px;width:34px;height:34px;background:#e3e3e3"></div>
<div style="left:621px;top:1582px;width:294px;height:34px;background:#fff"></div>
<div style="left:915px;top:1582px;width:756px;height:34px;background:#e8ebee"></div>
<div style="left:1671px;top:1582px;width:456px;height:34px;background:#fff"></div>
<div style="left:2127px;top:1358px;width:26px;height:258px;background:#e6e6e6"></div>
<div style="left:2153px;top:1317px;width:1px;height:299px;background:#cfcfcf"></div>
<div style="left:587px;top:1317px;width:1540px;height:1px;background:#cfcfcf"></div>
<div style="left:587px;top:1358px;width:1540px;height:1px;background:#cfcfcf"></div>
<div style="left:587px;top:1390px;width:1540px;height:1px;background:#cfcfcf"></div>
<div style="left:587px;top:1422px;width:1540px;height:1px;background:#cfcfcf"></div>
<div style="left:587px;top:1454px;width:1540px;height:1px;background:#cfcfcf"></div>
<div style="left:587px;top:1486px;width:1540px;height:1px;background:#cfcfcf"></div>
<div style="left:587px;top:1518px;width:1540px;height:1px;background:#cfcfcf"></div>
<div style="left:587px;top:1550px;width:1540px;height:1px;background:#cfcfcf"></div>
<div style="left:587px;top:1582px;width:1540px;height:1px;background:#cfcfcf"></div>
<div style="left:587px;top:1317px;width:1px;height:299px;background:#cfcfcf"></div>
<div style="left:621px;top:1317px;width:1px;height:299px;background:#cfcfcf"></div>
<div style="left:755px;top:1317px;width:1px;height:299px;background:#cfcfcf"></div>
<div style="left:915px;top:1317px;width:1px;height:299px;background:#cfcfcf"></div>
<div style="left:1046px;top:1317px;width:1px;height:299px;background:#cfcfcf"></div>
<div style="left:1190px;top:1317px;width:1px;height:299px;background:#cfcfcf"></div>
<div style="left:1362px;top:1317px;width:1px;height:299px;background:#cfcfcf"></div>
<div style="left:1504px;top:1317px;width:1px;height:299px;background:#cfcfcf"></div>
<div style="left:1671px;top:1317px;width:1px;height:299px;background:#cfcfcf"></div>
<div style="left:1826px;top:1317px;width:1px;height:299px;background:#cfcfcf"></div>
<div style="left:1981px;top:1317px;width:1px;height:299px;background:#cfcfcf"></div>
<div style="left:2127px;top:1317px;width:1px;height:299px;background:#cfcfcf"></div>
<div class="t" style="left:626.00px;top:1319.57px;font-size:20px;line-height:24px;color:#2c3139;">Whse Code</div>
<div class="t" style="left:760.00px;top:1319.57px;font-size:20px;line-height:24px;color:#2c3139;">Whse Name</div>
<div class="t" style="left:919.00px;top:1319.57px;font-size:20px;line-height:24px;color:#2c3139;">In Stock</div>
<div class="t" style="left:1050.00px;top:1319.57px;font-size:20px;line-height:24px;color:#2c3139;">Commited</div>
<div class="t" style="left:1194.00px;top:1319.57px;font-size:20px;line-height:24px;color:#2c3139;">Ordered</div>
<div class="t" style="left:1366.00px;top:1319.57px;font-size:20px;line-height:24px;color:#2c3139;">Available</div>
<div class="t" style="left:1509.00px;top:1319.57px;font-size:20px;line-height:24px;color:#2c3139;">Commited on pi...</div>
<div class="t" style="left:1676.00px;top:1319.57px;font-size:20px;line-height:24px;color:#2c3139;">Req. Stock</div>
<div class="t" style="left:1831.00px;top:1319.57px;font-size:20px;line-height:24px;color:#2c3139;">Min. Stock</div>
<div class="t" style="left:1986.00px;top:1319.57px;font-size:20px;line-height:24px;color:#2c3139;">Max. Stock</div>
<div class="t" style="left:625.00px;top:1364.07px;font-size:20px;line-height:24px;color:#000;">01</div>
<div class="t" style="left:758.00px;top:1364.07px;font-size:20px;line-height:24px;color:#000;">Main</div>
<div class="t" style="left:918.00px;top:1364.07px;font-size:20px;line-height:24px;color:#000;">100,000.000</div>
<div class="t" style="left:1049.00px;top:1364.07px;font-size:20px;line-height:24px;color:#000;">1,000.000</div>
<div class="t" style="left:1193.00px;top:1364.07px;font-size:20px;line-height:24px;color:#000;">0.000</div>
<div class="t" style="left:1365.00px;top:1364.07px;font-size:20px;line-height:24px;color:#000;">99,000.000</div>
<div class="t" style="left:1507.00px;top:1364.07px;font-size:20px;line-height:24px;color:#000;">0.000</div>
<div class="t" style="left:1674.00px;top:1364.07px;font-size:20px;line-height:24px;color:#000;">0.000</div>
<div class="t" style="left:1829.00px;top:1364.07px;font-size:20px;line-height:24px;color:#000;">0.000</div>
<div class="t" style="left:1984.00px;top:1364.07px;font-size:20px;line-height:24px;color:#000;">0.000</div>
<div class="t" style="left:625.00px;top:1396.07px;font-size:20px;line-height:24px;color:#000;">02</div>
<div class="t" style="left:758.00px;top:1396.07px;font-size:20px;line-height:24px;color:#000;">Secondary</div>
<div class="t" style="left:918.00px;top:1396.07px;font-size:20px;line-height:24px;color:#000;">0.000</div>
<div class="t" style="left:1049.00px;top:1396.07px;font-size:20px;line-height:24px;color:#000;">0.000</div>
<div class="t" style="left:1193.00px;top:1396.07px;font-size:20px;line-height:24px;color:#000;">0.000</div>
<div class="t" style="left:1365.00px;top:1396.07px;font-size:20px;line-height:24px;color:#000;">0.000</div>
<div class="t" style="left:1507.00px;top:1396.07px;font-size:20px;line-height:24px;color:#000;">0.000</div>
<div class="t" style="left:1674.00px;top:1396.07px;font-size:20px;line-height:24px;color:#000;">0.000</div>
<div class="t" style="left:1829.00px;top:1396.07px;font-size:20px;line-height:24px;color:#000;">0.000</div>
<div class="t" style="left:1984.00px;top:1396.07px;font-size:20px;line-height:24px;color:#000;">0.000</div>
<div class="t" style="left:625.00px;top:1428.07px;font-size:20px;line-height:24px;color:#000;">03</div>
<div class="t" style="left:758.00px;top:1428.07px;font-size:20px;line-height:24px;color:#000;">Third</div>
<div class="t" style="left:918.00px;top:1428.07px;font-size:20px;line-height:24px;color:#000;">0.000</div>
<div class="t" style="left:1049.00px;top:1428.07px;font-size:20px;line-height:24px;color:#000;">0.000</div>
<div class="t" style="left:1193.00px;top:1428.07px;font-size:20px;line-height:24px;color:#000;">0.000</div>
<div class="t" style="left:1365.00px;top:1428.07px;font-size:20px;line-height:24px;color:#000;">0.000</div>
<div class="t" style="left:1507.00px;top:1428.07px;font-size:20px;line-height:24px;color:#000;">0.000</div>
<div class="t" style="left:1674.00px;top:1428.07px;font-size:20px;line-height:24px;color:#000;">0.000</div>
<div class="t" style="left:1829.00px;top:1428.07px;font-size:20px;line-height:24px;color:#000;">0.000</div>
<div class="t" style="left:1984.00px;top:1428.07px;font-size:20px;line-height:24px;color:#000;">0.000</div>
<div class="t" style="left:625.00px;top:1460.07px;font-size:20px;line-height:24px;color:#000;">04</div>
<div class="t" style="left:758.00px;top:1460.07px;font-size:20px;line-height:24px;color:#000;">Fourth</div>
<div class="t" style="left:918.00px;top:1460.07px;font-size:20px;line-height:24px;color:#000;">0.000</div>
<div class="t" style="left:1049.00px;top:1460.07px;font-size:20px;line-height:24px;color:#000;">0.000</div>
<div class="t" style="left:1193.00px;top:1460.07px;font-size:20px;line-height:24px;color:#000;">0.000</div>
<div class="t" style="left:1365.00px;top:1460.07px;font-size:20px;line-height:24px;color:#000;">0.000</div>
<div class="t" style="left:1507.00px;top:1460.07px;font-size:20px;line-height:24px;color:#000;">0.000</div>
<div class="t" style="left:1674.00px;top:1460.07px;font-size:20px;line-height:24px;color:#000;">0.000</div>
<div class="t" style="left:1829.00px;top:1460.07px;font-size:20px;line-height:24px;color:#000;">0.000</div>
<div class="t" style="left:1984.00px;top:1460.07px;font-size:20px;line-height:24px;color:#000;">0.000</div>
<div class="t" style="left:625.00px;top:1492.07px;font-size:20px;line-height:24px;color:#000;">05</div>
<div class="t" style="left:758.00px;top:1492.07px;font-size:20px;line-height:24px;color:#000;">Fifth</div>
<div class="t" style="left:918.00px;top:1492.07px;font-size:20px;line-height:24px;color:#000;">0.000</div>
<div class="t" style="left:1049.00px;top:1492.07px;font-size:20px;line-height:24px;color:#000;">0.000</div>
<div class="t" style="left:1193.00px;top:1492.07px;font-size:20px;line-height:24px;color:#000;">0.000</div>
<div class="t" style="left:1365.00px;top:1492.07px;font-size:20px;line-height:24px;color:#000;">0.000</div>
<div class="t" style="left:1507.00px;top:1492.07px;font-size:20px;line-height:24px;color:#000;">0.000</div>
<div class="t" style="left:1674.00px;top:1492.07px;font-size:20px;line-height:24px;color:#000;">0.000</div>
<div class="t" style="left:1829.00px;top:1492.07px;font-size:20px;line-height:24px;color:#000;">0.000</div>
<div class="t" style="left:1984.00px;top:1492.07px;font-size:20px;line-height:24px;color:#000;">0.000</div>
<div class="t" style="left:625.00px;top:1524.07px;font-size:20px;line-height:24px;color:#000;">06</div>
<div class="t" style="left:758.00px;top:1524.07px;font-size:20px;line-height:24px;color:#000;">six</div>
<div class="t" style="left:918.00px;top:1524.07px;font-size:20px;line-height:24px;color:#000;">0.000</div>
<div class="t" style="left:1049.00px;top:1524.07px;font-size:20px;line-height:24px;color:#000;">0.000</div>
<div class="t" style="left:1193.00px;top:1524.07px;font-size:20px;line-height:24px;color:#000;">0.000</div>
<div class="t" style="left:1365.00px;top:1524.07px;font-size:20px;line-height:24px;color:#000;">0.000</div>
<div class="t" style="left:1507.00px;top:1524.07px;font-size:20px;line-height:24px;color:#000;">0.000</div>
<div class="t" style="left:1674.00px;top:1524.07px;font-size:20px;line-height:24px;color:#000;">0.000</div>
<div class="t" style="left:1829.00px;top:1524.07px;font-size:20px;line-height:24px;color:#000;">0.000</div>
<div class="t" style="left:1984.00px;top:1524.07px;font-size:20px;line-height:24px;color:#000;">0.000</div>
<div class="t" style="left:625.00px;top:1556.07px;font-size:20px;line-height:24px;color:#000;">07</div>
<div class="t" style="left:758.00px;top:1556.07px;font-size:20px;line-height:24px;color:#000;">seven</div>
<div class="t" style="left:918.00px;top:1556.07px;font-size:20px;line-height:24px;color:#000;">0.000</div>
<div class="t" style="left:1049.00px;top:1556.07px;font-size:20px;line-height:24px;color:#000;">0.000</div>
<div class="t" style="left:1193.00px;top:1556.07px;font-size:20px;line-height:24px;color:#000;">0.000</div>
<div class="t" style="left:1365.00px;top:1556.07px;font-size:20px;line-height:24px;color:#000;">0.000</div>
<div class="t" style="left:1507.00px;top:1556.07px;font-size:20px;line-height:24px;color:#000;">0.000</div>
<div class="t" style="left:1674.00px;top:1556.07px;font-size:20px;line-height:24px;color:#000;">0.000</div>
<div class="t" style="left:1829.00px;top:1556.07px;font-size:20px;line-height:24px;color:#000;">0.000</div>
<div class="t" style="left:1984.00px;top:1556.07px;font-size:20px;line-height:24px;color:#000;">0.000</div>
<div style="left:2199px;top:1126px;width:1px;height:490px;background:#d0d0d0"></div>
<div style="left:2209px;top:1053px;width:1px;height:563px;background:#c4c4c4"></div>
<div style="left:2224px;top:866px;width:8px;height:750px;background:#efefef"></div>
<svg style="left:0;top:0;overflow:visible" width="1" height="1"><defs><filter id="sh1023" x="-20%" y="-20%" width="140%" height="140%"><feGaussianBlur in="SourceAlpha" stdDeviation="2"/><feOffset dx="1" dy="3"/><feComponentTransfer><feFuncA type="linear" slope="0.45"/></feComponentTransfer><feMerge><feMergeNode/><feMergeNode in="SourceGraphic"/></feMerge></filter></defs><g filter="url(#sh1023)" transform="translate(908,1019.5) rotate(328.85342411544946)"><path d="M0,0 L18,-7.8 L15,-2.8 L134.4,-2.8 A2.8,2.8 0 0 1 134.4,2.8 L15,2.8 L18,7.8 Z" fill="#dd3f42"/></g></svg>
<svg style="left:0;top:0;overflow:visible" width="1" height="1"><defs><filter id="sh1251" x="-20%" y="-20%" width="140%" height="140%"><feGaussianBlur in="SourceAlpha" stdDeviation="2"/><feOffset dx="1" dy="3"/><feComponentTransfer><feFuncA type="linear" slope="0.45"/></feComponentTransfer><feMerge><feMergeNode/><feMergeNode in="SourceGraphic"/></feMerge></filter></defs><g filter="url(#sh1251)" transform="translate(1128,1200.5) rotate(326.30993247402023)"><path d="M0,0 L18,-7.8 L15,-2.8 L147.8,-2.8 A2.8,2.8 0 0 1 147.8,2.8 L15,2.8 L18,7.8 Z" fill="#dd3f42"/></g></svg>
<div style="left:2219px;top:0px;width:1px;height:1616px;background:#000"></div>
<div style="left:0px;top:1615px;width:2220px;height:1px;background:#000"></div>
<div style="left:0px;top:0px;width:1px;height:1616px;background:#000"></div>
</body></html>
